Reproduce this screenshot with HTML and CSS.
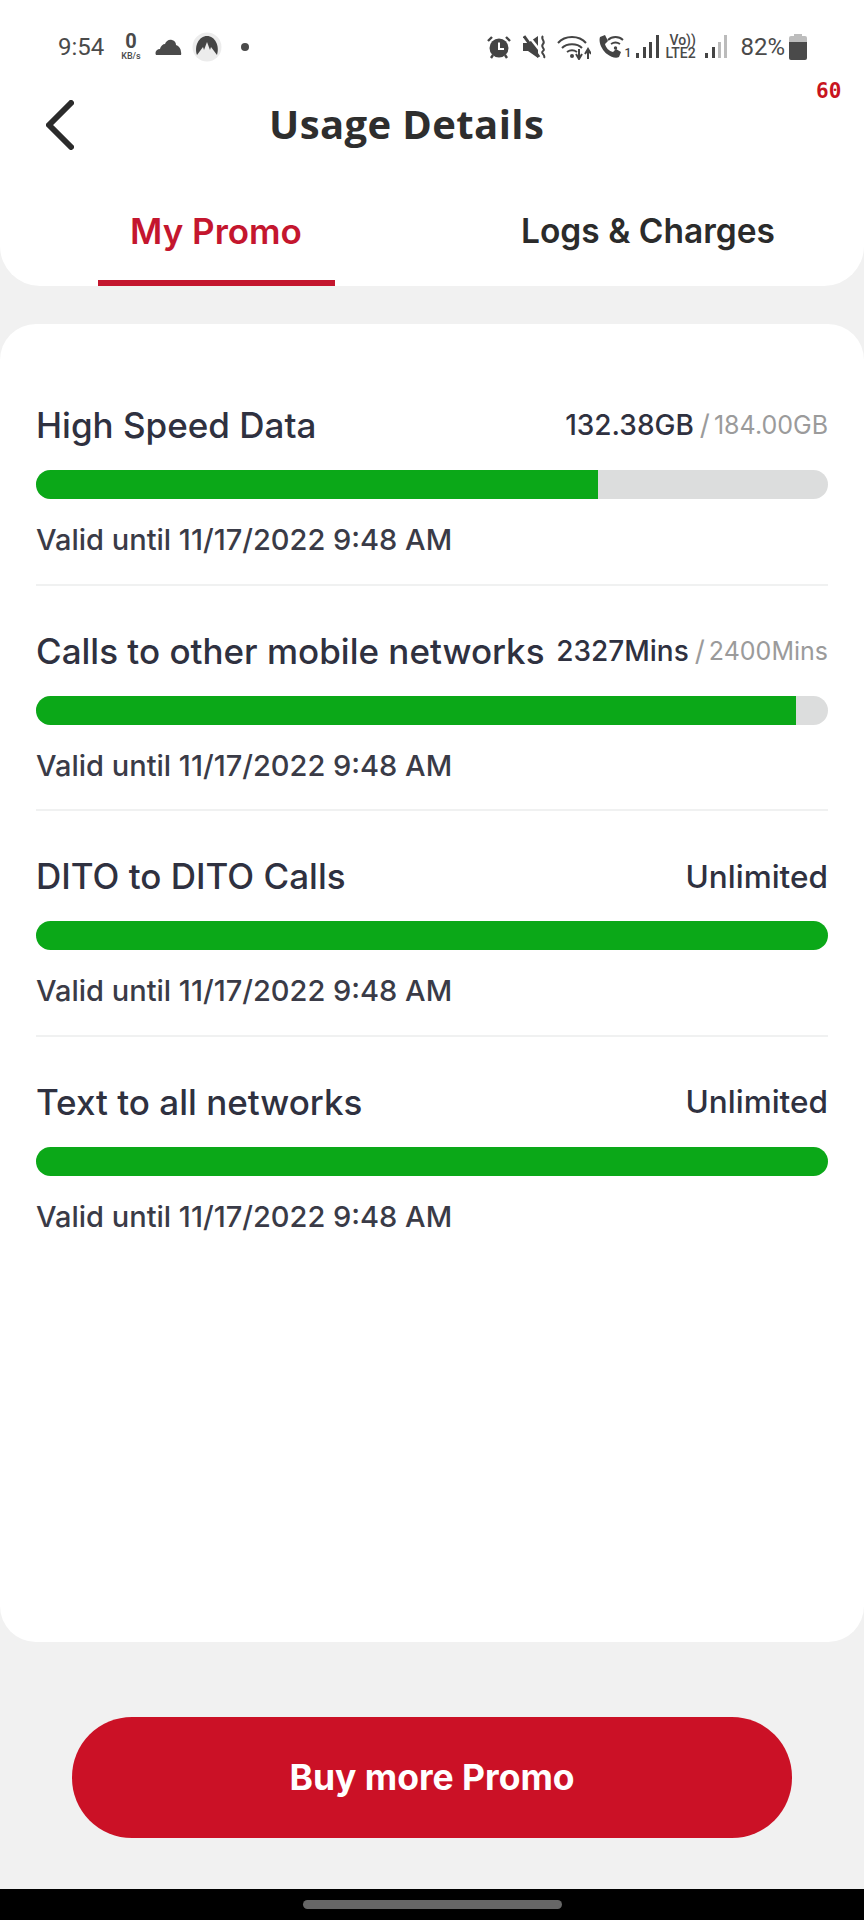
FILE: index.html
```html
<!DOCTYPE html>
<html lang="en">
<head>
  <meta charset="UTF-8">
  <meta name="viewport" content="width=device-width, initial-scale=1.0">
  <title>Usage Details</title>
  <link rel="stylesheet" href="styles.css">
</head>
<body>
  <div class="screen">
    <header class="top">
      <div class="status">
        <div class="status-left">
          <span class="clock">9:54</span>
          <span class="speed"><b>0</b><small>KB/s</small></span>
          <svg class="ic-cloud" width="27" height="16" viewBox="0 0 27 16"><path fill="#4a4a4a" d="M1 16c-1.500-3 .5-6 4-6 .5-3 3-5 5-5 1-3 4-5 7-4 3 .5 4 3 4 5 3 1 5 4 5 7 .5 1.500 0 3 0 3z"/></svg>
          <svg class="ic-nord" width="30" height="30" viewBox="0 0 30 30"><circle cx="15" cy="15" r="14.500" fill="#ececec"/><path fill="#444" d="M5 23C2 14 7 4 15 4s13 10 10 19l-6-8-1 3-3-8-3 8-1-3z"/></svg>
          <span class="dot"></span>
        </div>
        <div class="status-right">
          <svg width="24" height="24" viewBox="0 0 24 24"><circle cx="12" cy="13" r="9.500" fill="#444"/><path d="M12 7.500V14h5" fill="none" stroke="#fff" stroke-width="2"/><path d="M1 6l4-4M23 6l-4-4M4 23l2-3M20 23l-2-3" stroke="#444" stroke-width="2.400" fill="none"/></svg>
          <svg class="gap-mute" width="24" height="24" viewBox="0 0 24 24"><path fill="#444" d="M0 8h5L15 1v22L5 16H0z"/><path d="M4 -1l15 19" stroke="#fff" stroke-width="2.500"/><path d="M1 1l15 21" stroke="#444" stroke-width="3"/><path d="M20 1c-3 3 3 5 0 8s3 5 0 7 3 4 1 7" fill="none" stroke="#444" stroke-width="2"/></svg>
          <svg class="gap-wifi" width="34" height="26" viewBox="0 0 34 26"><path d="M1 9c7-8 21-8 28 0M5 14c5-5 15-5 20 0M10 18c3-2 7-2 10 0" fill="none" stroke="#444" stroke-width="2"/><circle cx="15" cy="22" r="2" fill="#444"/><path d="M22 15v9M19 20l3 5 3-5M31 25v-9M28 20l3-5 3 5" fill="none" stroke="#444" stroke-width="2"/></svg>
          <span class="call">
            <svg width="25" height="26" viewBox="0 0 25 26"><path fill="#444" d="M1 3l5-2 3 6-3 3c1 4 4 7 8 8l3-3 5 3-2 5c-3 2-8 0-12-3S-1 9 1 3z"/><path d="M9 6c4-4 11-4 15 0M12 10c3-2 6-2 9 0" fill="none" stroke="#444" stroke-width="1.800"/><circle cx="16.500" cy="14" r="1.700" fill="#444"/></svg>
            <span class="sim">1</span>
          </span>
          <svg class="gap-sig" width="23" height="24" viewBox="0 0 23 24"><path fill="#444" d="M0 18h3v5H0zM7 12h3v11H7zM13 7h3v16h-3zM20 0h3v23h-3z"/></svg>
          <span class="volte"><i>Vo))</i><i>LTE2</i></span>
          <svg class="gap-sig2" width="22" height="24" viewBox="0 0 22 24"><path fill="#444" d="M0 18h3v5H0zM7 12h3v11H7z"/><path fill="#bbb" d="M13 7h3v16h-3zM19 0h3v23h-3z"/></svg>
          <span class="pct">82%</span>
          <svg class="gap-bat" width="18" height="26" viewBox="0 0 18 26"><path fill="#bdbdbd" d="M5 0h8v2h3a2 2 0 0 1 2 2v5H0V4a2 2 0 0 1 2-2h3z"/><path fill="#4a4a4a" d="M0 8h18v16a2 2 0 0 1-2 2H2a2 2 0 0 1-2-2z"/></svg>
        </div>
      </div>
      <span class="fps">60</span>
      <div class="title-bar">
        <svg class="back" width="28" height="50" viewBox="0 0 28 50"><path d="M25 3L3 25l22 22" fill="none" stroke="#2b2b2b" stroke-width="6" stroke-linecap="round" stroke-linejoin="round"/></svg>
        <h1>Usage Details</h1>
      </div>
      <nav class="tabs">
        <div class="tab active"><span>My Promo</span></div>
        <div class="tab"><span>Logs &amp; Charges</span></div>
      </nav>
    </header>

    <main class="card">
      <section class="row">
        <div class="row-head">
          <h2>High Speed Data</h2>
          <div class="amount"><b>132.38GB</b><em>/</em><span>184.00GB</span></div>
        </div>
        <div class="bar"><div class="fill" style="width: 71%"></div></div>
        <p class="valid">Valid until 11/17/2022 9:48 AM</p>
      </section>
      <section class="row">
        <div class="row-head">
          <h2>Calls to other mobile networks</h2>
          <div class="amount"><b>2327Mins</b><em>/</em><span>2400Mins</span></div>
        </div>
        <div class="bar"><div class="fill" style="width: 96%"></div></div>
        <p class="valid">Valid until 11/17/2022 9:48 AM</p>
      </section>
      <section class="row">
        <div class="row-head">
          <h2>DITO to DITO Calls</h2>
          <div class="amount"><b class="unlimited">Unlimited</b></div>
        </div>
        <div class="bar"><div class="fill" style="width: 100%"></div></div>
        <p class="valid">Valid until 11/17/2022 9:48 AM</p>
      </section>
      <section class="row">
        <div class="row-head">
          <h2>Text to all networks</h2>
          <div class="amount"><b class="unlimited">Unlimited</b></div>
        </div>
        <div class="bar"><div class="fill" style="width: 100%"></div></div>
        <p class="valid">Valid until 11/17/2022 9:48 AM</p>
      </section>
    </main>

    <div class="actions">
      <button class="buy">Buy more Promo</button>
    </div>

    <footer class="navbar"><span class="pill"></span></footer>
  </div>
</body>
</html>
```

FILE: styles.css
```css
* {
  box-sizing: border-box;
}

body {
  margin: 0;
  font-family: Inter, "Noto Sans", sans-serif;
  background-color: #f1f1f1;
}

.screen {
  display: flex;
  flex-direction: column;
  height: 1920px;
  overflow: hidden;
}

/* header */
.top {
  position: relative;
  height: 286px;
  background-color: #fff;
  border-radius: 0 0 40px 40px;
}

.status {
  display: flex;
  justify-content: space-between;
  align-items: center;
  height: 80px;
  padding: 14px 57px 0 58px;
  color: #4a4a4a;
  font-family: Roboto, sans-serif;
}

.status-left,
.status-right {
  display: flex;
  align-items: center;
}

.clock {
  font-size: 24px;
  width: 63px;
}

.speed {
  display: flex;
  flex-direction: column;
  align-items: center;
  width: 20px;
  line-height: 1;
}

.speed b {
  font-size: 20px;
  font-weight: 700;
  line-height: 17px;
}

.speed small {
  font-size: 9px;
  font-weight: 500;
  margin-top: 2px;
}

.ic-cloud {
  margin-left: 14px;
}

.ic-nord {
  margin-left: 10px;
}

.dot {
  width: 8px;
  height: 8px;
  margin-left: 19px;
  background-color: #4a4a4a;
  border-radius: 50%;
}

.gap-mute {
  margin-left: 12px;
}

.gap-wifi {
  margin-left: 10px;
}

.call {
  display: flex;
  align-items: flex-end;
  margin-left: 8px;
}

.sim {
  width: 7px;
  font-size: 12px;
  font-weight: 500;
  line-height: 14px;
  color: #444;
}

.gap-sig {
  margin-left: 5px;
}

.volte {
  display: flex;
  flex-direction: column;
  align-items: flex-start;
  width: 34px;
  margin-left: 6px;
  font-size: 14px;
  line-height: 13px;
}

.volte i {
  font-style: normal;
  font-weight: 500;
}

.volte i:first-child {
  margin-left: 4px;
}

.gap-sig2 {
  margin-left: 6px;
}

.pct {
  margin-left: 13px;
  font-size: 24px;
}

.gap-bat {
  margin-left: 4px;
}

.fps {
  position: absolute;
  top: 81px;
  left: 816px;
  color: #c8141e;
  font-family: "DejaVu Sans Mono", monospace;
  font-size: 21px;
  font-weight: 700;
  line-height: 20px;
}

.title-bar {
  display: flex;
  align-items: center;
  height: 90px;
  padding-left: 46px;
}

.title-bar h1 {
  margin: 0 0 4px 195px;
  color: #2e2e2e;
  font-family: "Open Sans", sans-serif;
  font-size: 40px;
  font-weight: 700;
  letter-spacing: .4px;
}

.tabs {
  display: grid;
  grid-template-columns: 1fr 1fr;
  height: 116px;
}

.tab {
  display: flex;
  justify-content: center;
  color: #2b2b2b;
  font-size: 33.500px;
  font-weight: 600;
}

.tab span {
  display: flex;
  justify-content: center;
  width: 237px;
  padding-top: 41px;
  line-height: 40px;
  white-space: nowrap;
}

.tab.active {
  color: #c4162e;
  font-size: 35px;
}

.tab.active span {
  border-bottom: 6px solid #c4162e;
}

/* promo list */
.card {
  height: 1318px;
  margin-top: 38px;
  padding: 36px 36px 0;
  background-color: #fff;
  border-radius: 36px;
}

.row {
  padding: 45px 0 23.500px;
  border-bottom: 2px solid #f0f1f1;
}

.row:last-child {
  border-bottom: none;
}

.row-head {
  display: flex;
  justify-content: space-between;
  align-items: center;
  height: 40px;
}

.row-head h2 {
  margin: 0;
  color: #2f3140;
  font-size: 35px;
  font-weight: 500;
  white-space: nowrap;
}

.amount {
  display: flex;
  align-items: center;
  white-space: nowrap;
  font-size: 28px;
}

.amount b {
  color: #2f3140;
  font-weight: 500;
}

.amount b.unlimited {
  font-size: 31.500px;
}

.amount em {
  margin: 0 4px 0 6px;
  color: #9b9b9b;
  font-style: normal;
}

.amount span {
  color: #9b9b9b;
  font-size: 25px;
}

.bar {
  height: 29px;
  margin-top: 25px;
  background-color: #dcdddd;
  border-radius: 15px;
  overflow: hidden;
}

.fill {
  height: 100%;
  background-color: #0ba818;
}

.valid {
  height: 40px;
  margin: 21px 0 0;
  color: #3a3b47;
  font-size: 29px;
  font-weight: 500;
  line-height: 40px;
}

/* bottom */
.actions {
  padding: 75px 72px 51px;
}

.buy {
  display: block;
  width: 100%;
  height: 121px;
  background-color: #cb1126;
  color: #fff;
  font-family: Inter, sans-serif;
  font-size: 35.500px;
  font-weight: 700;
  border: none;
  border-radius: 60px;
}

.navbar {
  display: flex;
  justify-content: center;
  align-items: center;
  height: 31px;
  background-color: #000;
}

.pill {
  width: 259px;
  height: 9px;
  background-color: #666;
  border-radius: 5px;
}
```
